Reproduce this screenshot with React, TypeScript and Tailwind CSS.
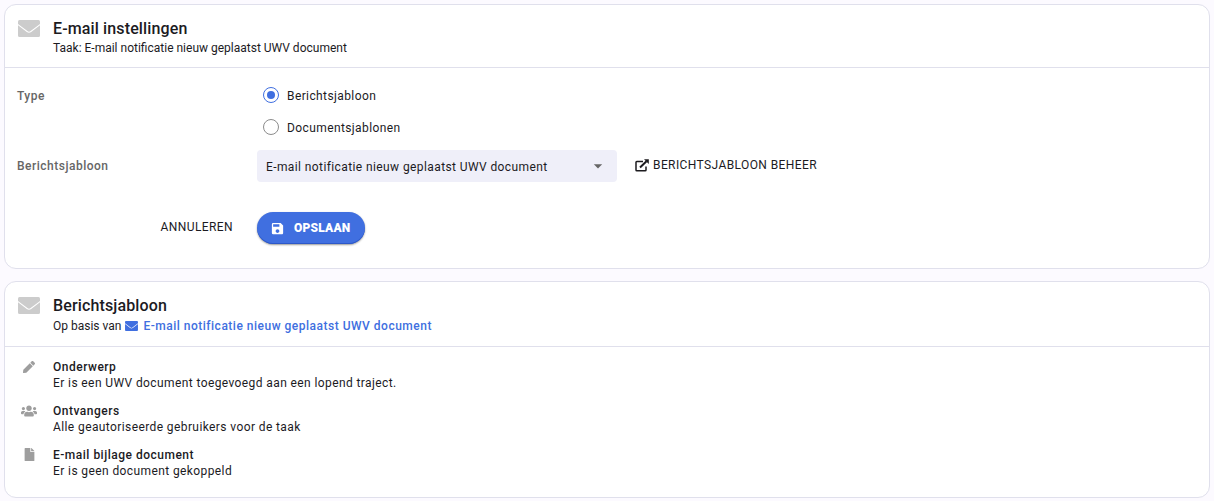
import React, { useState } from 'react';
import { FaPen, FaUsers, FaFile } from 'react-icons/fa';
import { MdSave, MdArrowDropDown } from 'react-icons/md';

const types = ['Berichtsjabloon', 'Documentsjablonen'];

const details = [
  { icon: FaPen, size: 12, title: 'Onderwerp', text: 'Er is een UWV document toegevoegd aan een lopend traject.' },
  { icon: FaUsers, size: 16, title: 'Ontvangers', text: 'Alle geautoriseerde gebruikers voor de taak' },
  { icon: FaFile, size: 13, title: 'E-mail bijlage document', text: 'Er is geen document gekoppeld' },
];

function Envelope({ className }: { className: string }) {
  return (
    <svg className={className} viewBox="0 0 22 17" fill="currentColor">
      <path d="M1.5 0H20.5Q22 0 22 1.5V4L12.6 11.1Q11 12.3 9.4 11.1L0 4V1.5Q0 0 1.5 0Z" />
      <path d="M0 5.3L8.8 12Q11 13.6 13.2 12L22 5.3V15.5Q22 17 20.5 17H1.5Q0 17 0 15.5Z" />
    </svg>
  );
}

function CardHeader({ title, children }: { title: string; children: React.ReactNode }) {
  return (
    <div className="flex border-b border-[#e0e0ec] pl-[13px]">
      <Envelope className="mt-[15px] h-[17px] w-[22px] shrink-0 text-[#cccccc]" />
      <div className="ml-[13px] pt-[14px]">
        <h2 className="text-base leading-5 font-medium tracking-[0.13px]">{title}</h2>
        {children}
      </div>
    </div>
  );
}

function ExternalLink() {
  return (
    <svg className="h-[13px] w-[14px]" viewBox="0 0 14 13" fill="none" stroke="currentColor">
      <path d="M8 2.5H1.8Q1 2.5 1 3.3V11Q1 11.8 1.8 11.8H10.2Q11 11.8 11 11V7.5" strokeWidth="1.5" />
      <path d="M5 8.5L11.5 2.2" strokeWidth="2" />
      <path d="M9 0.2H13.8V5Z" fill="currentColor" stroke="none" />
    </svg>
  );
}

export default function App() {
  const [type, setType] = useState(types[0]);

  return (
    <div className="h-[501px] overflow-hidden bg-[#fcfaff] px-1 pt-1 font-[Roboto,sans-serif] text-xs tracking-[0.4px] text-[#1c1b1f]">
      <section className="h-[265px] rounded-xl border border-[#e0e0ec] bg-white">
        <CardHeader title="E-mail instellingen">
          <p className="mt-[1px] mb-[11px] leading-4 tracking-normal">Taak: E-mail notificatie nieuw geplaatst UWV document</p>
        </CardHeader>

        <div className="flex pl-3">
          <div className="w-60 pt-5 leading-4 font-medium tracking-[0.5px] text-[#666666]">Type</div>
          <div className="flex flex-col gap-4 pt-[19px] pl-[6px]">
            {types.map((t) => (
              <label key={t} className="flex h-4 items-center gap-2">
                <input type="radio" name="type" className="peer sr-only" checked={type === t} onChange={() => setType(t)} />
                <span className="flex h-4 w-4 items-center justify-center rounded-full border border-[#8c8c8c] peer-checked:border-[#406fe0]">
                  {type === t && <span className="h-2 w-2 rounded-full bg-[#406fe0]"></span>}
                </span>
                <span className="pt-0.5">{t}</span>
              </label>
            ))}
          </div>
        </div>

        <div className="mt-[15px] flex pl-3">
          <div className="w-60 pt-2 leading-4 font-medium tracking-[0.5px] text-[#666666]">Berichtsjabloon</div>
          <button className="flex h-8 w-[360px] items-center justify-between rounded bg-[#efeff9] pr-[9px] pl-[9px] tracking-[0.4px]">
            <span className="pt-0.5">E-mail notificatie nieuw geplaatst UWV document</span>
            <MdArrowDropDown className="h-5 w-5 text-[#666666]" />
          </button>
          <a className="ml-[18px] flex h-[30px] items-center gap-1">
            <ExternalLink />
            <span>BERICHTSJABLOON BEHEER</span>
          </a>
        </div>

        <div className="mt-[30px] flex">
          <button className="h-[30px] w-[228px] text-right">ANNULEREN</button>
          <button className="ml-6 flex h-8 w-[108px] items-center rounded-full bg-[#406fe0] pl-[13px] font-black tracking-[0.2px] text-white shadow-[0_1px_2px_rgba(0,0,0,0.4),inset_0_-1px_0_#2d58c8]">
            <MdSave className="mr-[9px] h-[15px] w-[15px]" />
            OPSLAAN
          </button>
        </div>
      </section>

      <section className="mt-3 h-[217px] rounded-xl border border-[#e0e0ec] bg-white">
        <CardHeader title="Berichtsjabloon">
          <p className="mt-[2px] mb-3 flex items-center leading-4 tracking-normal">
            Op basis van
            <Envelope className="mr-[5px] ml-1 h-[10px] w-[13px] text-[#406fe0]" />
            <a className="font-medium tracking-[0.5px] text-[#406fe0]">E-mail notificatie nieuw geplaatst UWV document</a>
          </p>
        </CardHeader>

        <ul className="flex flex-col gap-3 pt-3 pl-3">
          {details.map(({ icon: Icon, size, title, text }) => (
            <li key={title} className="flex leading-4">
              <div className="flex h-[15px] w-6 items-center justify-center text-[#9e9e9e]">
                <Icon size={size} />
              </div>
              <div className="ml-3">
                <div className="font-medium tracking-[0.5px]">{title}</div>
                <div>{text}</div>
              </div>
            </li>
          ))}
        </ul>
      </section>
    </div>
  );
}
